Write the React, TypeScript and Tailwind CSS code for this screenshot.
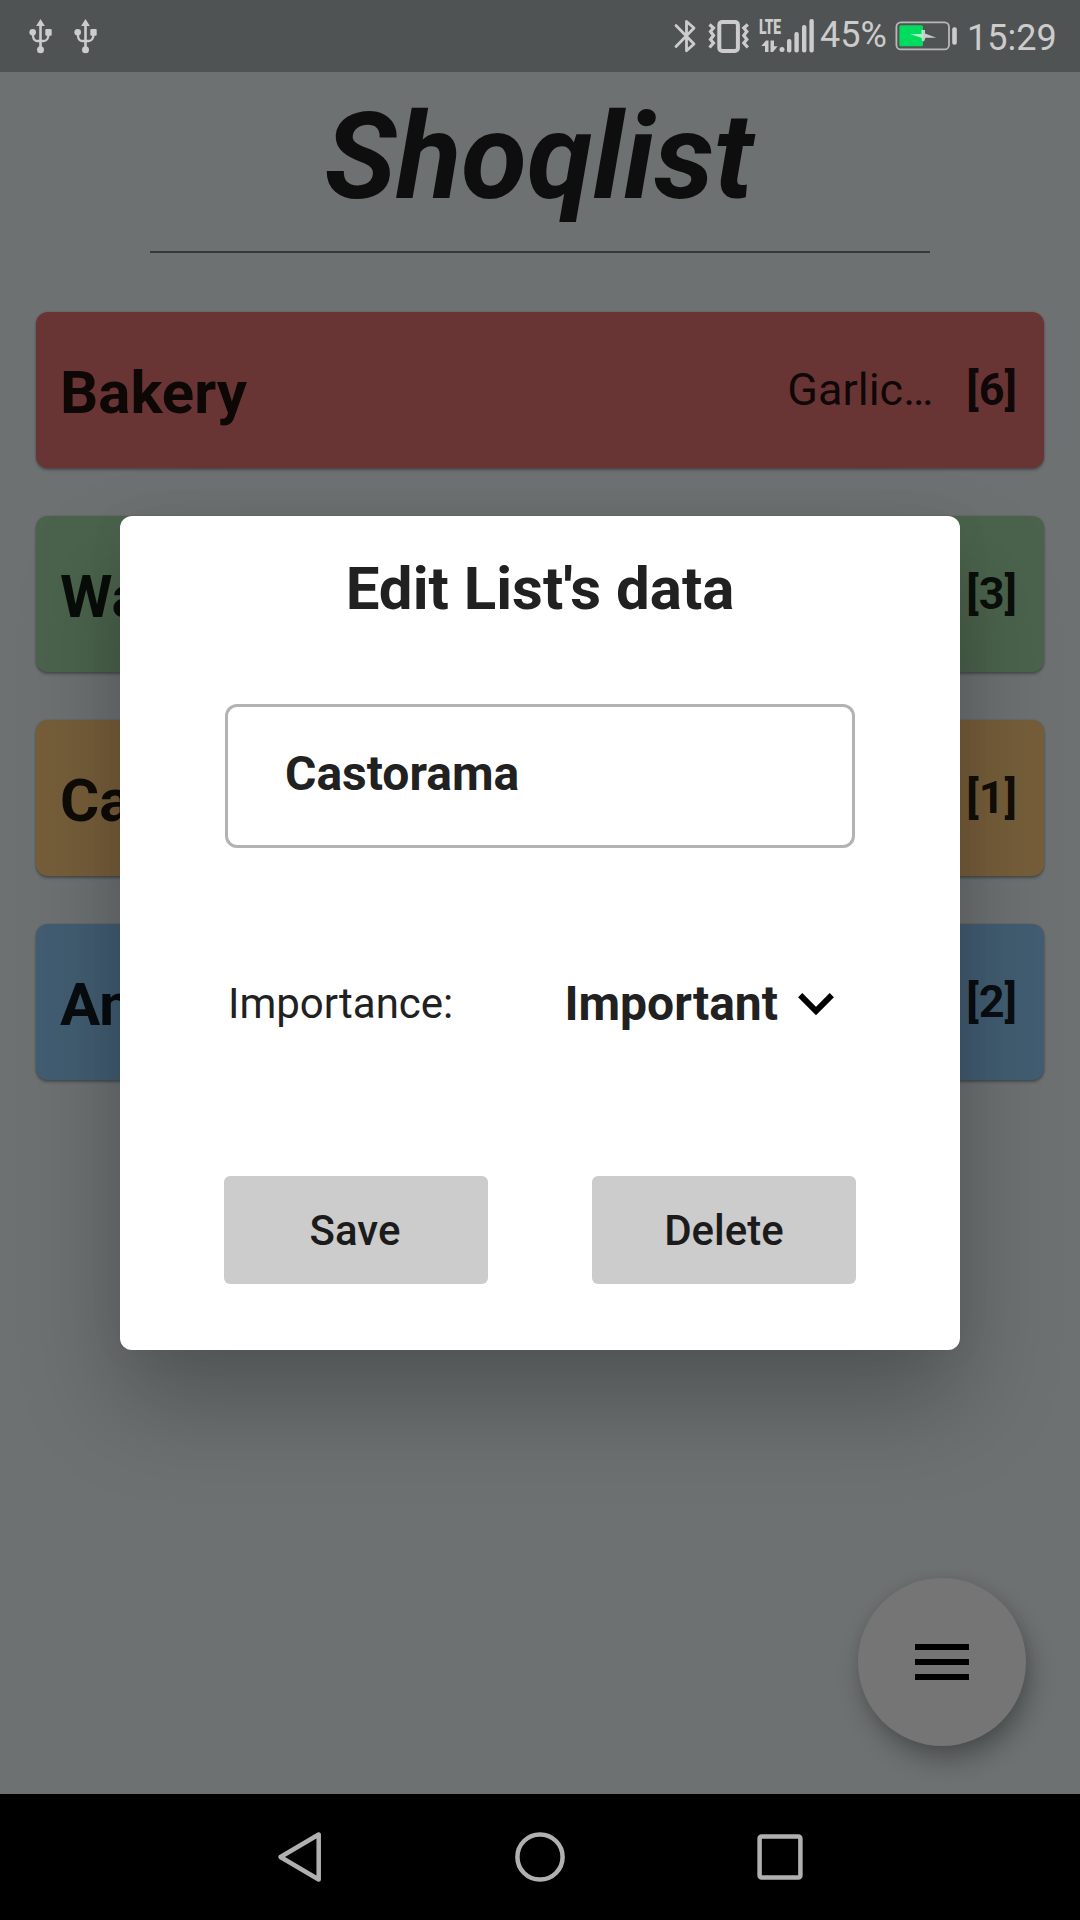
import React from "react";

type ShoppingList = {
  name: string;
  preview: string;
  count: number;
  color: string;
};

const lists: ShoppingList[] = [
  { name: "Bakery", preview: "Garlic…", count: 6, color: "bg-[#693534]" },
  { name: "Water", preview: "", count: 3, color: "bg-[#4b634c]" },
  { name: "Castorama", preview: "", count: 1, color: "bg-[#765e3a]" },
  { name: "Any", preview: "", count: 2, color: "bg-[#425d72]" },
];

function UsbIcon() {
  return (
    <svg width="24" height="36" viewBox="-0.5 0 24 36" fill="#cccccc">
      <path d="M12 1 L16.4 8 H7.6 Z" />
      <circle cx="4.2" cy="14.3" r="3.3" />
      <rect x="16.8" y="11" width="6.4" height="6.8" rx="1" />
      <circle cx="12" cy="31.7" r="3.5" />
      <path d="M12 6 V30" stroke="#cccccc" strokeWidth="2.6" />
      <path
        d="M4.5 16 V18 Q5 23 9 23 H15 Q19.5 23 20 17"
        fill="none"
        stroke="#cccccc"
        strokeWidth="2.3"
      />
    </svg>
  );
}

function BluetoothIcon() {
  return (
    <svg width="24" height="38" viewBox="0 0 24 38" fill="none" stroke="#cccccc" strokeWidth="2.8">
      <path d="M2 8.5 L20 27 L12.5 33.8 V4.5 L20 11 L2 29.5" strokeLinejoin="round" strokeLinecap="round" />
    </svg>
  );
}

function VibrateIcon() {
  return (
    <svg width="44" height="36" viewBox="0 0 44 36" fill="none" stroke="#cccccc">
      <rect x="12.3" y="3.9" width="18.6" height="29.1" rx="3" strokeWidth="4" />
      <path d="M2.5 6.5 L6.5 10 L3.5 13.5 L6.5 17.5 L3.5 21.5 L6.5 25 L2.5 29.5" strokeWidth="3.2" />
      <path d="M40.8 6.5 L36.8 10 L39.8 13.5 L36.8 17.5 L39.8 21.5 L36.8 25 L40.8 29.5" strokeWidth="3.2" />
    </svg>
  );
}

function SignalIcon() {
  return (
    <svg width="56" height="36" viewBox="0 0 56 36" fill="#cccccc">
      <path d="M2.3 28 L7 22.5 H9.5 V34 H6 V28 Z" />
      <path d="M11.5 22.5 H15 V28.3 H18.6 L14 34 H11.5 Z" />
      <circle cx="23" cy="31.6" r="2.5" />
      <rect x="28" y="21" width="4.4" height="13.4" rx="2" />
      <rect x="35.4" y="14" width="4.4" height="20.4" rx="2" />
      <rect x="43" y="7" width="4.4" height="27.4" rx="2" />
      <rect x="50.4" y="1" width="4.4" height="33.4" rx="2" />
    </svg>
  );
}

function BatteryIcon() {
  return (
    <svg width="64" height="32" viewBox="0 0 64 32" fill="none">
      <rect x="2.4" y="2.4" width="52.6" height="27" rx="4.5" stroke="#b8b8b8" strokeWidth="1.8" />
      <rect x="5.4" y="5.2" width="23.6" height="21" rx="1.5" fill="#00dd5e" />
      <rect x="58.2" y="7.2" width="4.6" height="17.6" rx="2" fill="#cccccc" />
      <path d="M29 10 L31 10 V13.5 L42.3 17.7 H31.5 L30 21.5 L29 21 Z" fill="#cccccc" />
      <path d="M29 10 V21 L27.8 20.5 V18 L16 14 H27.5 V10 Z" fill="#a6f3c4" />
    </svg>
  );
}

function StatusBar() {
  return (
    <header className="flex h-[72px] shrink-0 bg-[#505354] text-[36px] leading-[42px] text-[#cccccc]">
      <div className="ml-[28px] flex gap-[21px] pt-[18px]">
        <UsbIcon />
        <UsbIcon />
      </div>
      <div className="ml-auto flex w-[406px]">
        <div className="w-[33px] pt-[17px]">
          <BluetoothIcon />
        </div>
        <div className="w-[52px] pt-[18px]">
          <VibrateIcon />
        </div>
        <div className="relative w-[61px] pt-[18px]">
          <span className="absolute left-0 top-[17px] origin-left scale-x-[0.66] text-[21px] font-black leading-[21px] tracking-[-0.5px]">
            LTE
          </span>
          <SignalIcon />
        </div>
        <div className="w-[74px] pt-[14px]">45%</div>
        <div className="w-[73px] pt-[20px]">
          <BatteryIcon />
        </div>
        <div className="pt-[17px]">15:29</div>
      </div>
    </header>
  );
}

function ListCard({ list }: { list: ShoppingList }) {
  return (
    <li
      className={`flex h-[156px] items-center rounded-[12px] pl-6 pr-[27px] text-black/87 shadow-[0_2px_3px_rgba(0,0,0,0.32),0_0_2px_rgba(0,0,0,0.15)] ${list.color}`}
    >
      <span className="pt-[5px] text-[60px] font-bold leading-[70px]">{list.name}</span>
      <span className="-mt-[2px] ml-auto text-[45px] leading-[53px]">{list.preview}</span>
      <span className="-mt-[2px] ml-[33px] text-[45px] font-bold leading-[53px]">[{list.count}]</span>
    </li>
  );
}

function EditDialog() {
  return (
    <section
      role="dialog"
      className="absolute left-[120px] top-[516px] flex h-[834px] w-[840px] flex-col rounded-[12px] bg-white px-[104px] text-[#212121] shadow-[0_52px_98px_rgba(0,0,0,0.26),0_0_40px_rgba(0,0,0,0.04)]"
    >
      <h2 className="mt-[38px] text-center text-[60px] font-bold leading-[70px]">Edit List's data</h2>
      <div className="mx-px mt-[80px] flex h-[144px] items-center rounded-[12px] border-[3px] border-[#b3b3b3] pb-[4px] pl-[57px] text-[48px] font-bold leading-[56px]">
        Castorama
      </div>
      <div className="mt-[128px] flex h-[56px] items-center">
        <span className="-mt-[2px] ml-[4px] text-[42px] leading-[49px]">Importance:</span>
        <span className="ml-auto text-[48px] font-bold leading-[56px]">Important</span>
        <svg className="ml-[20px] mr-[22px]" width="36" height="24" viewBox="0 0 36 24">
          <path d="M2.2 3.2 L18 19 L33.8 3.2" fill="none" stroke="#000" strokeWidth="6" />
        </svg>
      </div>
      <div className="mt-[144px] flex justify-between text-[42px] font-medium leading-[49px] text-[#1b1b1b]">
        <button className="h-[108px] w-[264px] rounded-[6px] bg-[#cccccc] pr-[2px]">Save</button>
        <button className="h-[108px] w-[264px] rounded-[6px] bg-[#cccccc]">Delete</button>
      </div>
    </section>
  );
}

function NavigationBar() {
  return (
    <nav className="flex h-[126px] shrink-0 items-center justify-center gap-[180px] bg-black">
      <svg width="60" height="60" viewBox="0 0 60 60" fill="none" stroke="#b0b0b0" strokeWidth="4.5">
        <path d="M48.7 7.5 V52.5 L10.5 30 Z" strokeLinejoin="round" />
      </svg>
      <svg width="60" height="60" viewBox="0 0 60 60" fill="none" stroke="#b0b0b0" strokeWidth="4.5">
        <circle cx="30" cy="30" r="22.6" />
      </svg>
      <svg width="60" height="60" viewBox="0 0 60 60" fill="none" stroke="#b0b0b0" strokeWidth="4.5">
        <rect x="9.6" y="9.6" width="40.8" height="40.8" rx="2" />
      </svg>
    </nav>
  );
}

export default function App() {
  return (
    <div className="relative flex h-[1920px] w-[1080px] flex-col overflow-hidden bg-[#6d7172] font-[Roboto,sans-serif]">
      <StatusBar />
      <main className="relative flex flex-1 flex-col px-9">
        <h1 className="mt-[15px] pr-[2px] text-center text-[120px] font-bold italic leading-[141px] text-[#0e0e0e]">
          Shoqlist
        </h1>
        <hr className="mx-[114px] mt-[23px] h-[2px] border-0 bg-[#38393a]" />
        <ul className="mt-[59px] flex flex-col gap-12">
          {lists.map((list) => (
            <ListCard key={list.name} list={list} />
          ))}
        </ul>
        <button className="absolute bottom-[48px] right-[54px] flex size-[168px] flex-col items-center justify-center gap-[9px] rounded-full bg-[#757575] shadow-[5px_14px_27px_-2px_rgba(0,0,0,0.32),0_0_12px_rgba(0,0,0,0.06)]">
          <span className="h-[6px] w-[54px] bg-black" />
          <span className="h-[6px] w-[54px] bg-black" />
          <span className="h-[6px] w-[54px] bg-black" />
        </button>
      </main>
      <NavigationBar />
      <EditDialog />
    </div>
  );
}
